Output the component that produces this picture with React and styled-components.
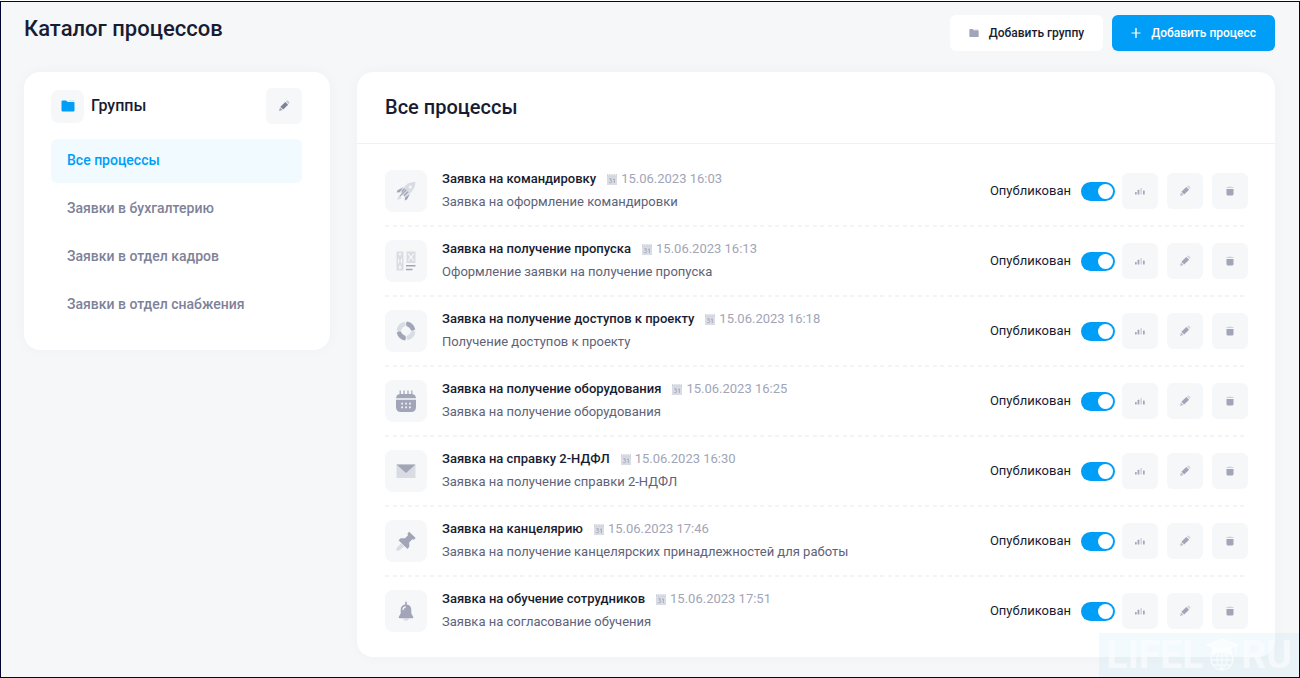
import React, { useState } from "react";
import styled, { createGlobalStyle } from "styled-components";

const GlobalStyle = createGlobalStyle`
  *, *::before, *::after { box-sizing: border-box; }
  body {
    margin: 0;
    background: #fff;
    color: #181c32;
    font-family: Roboto, "Liberation Sans", sans-serif;
    font-size: 13px;
  }
  button { font-family: inherit; cursor: pointer; }
`;

const Frame = styled.div`
  position: relative;
  margin-top: 1px;
  min-height: calc(100vh - 1px);
  padding: 13px 24px 19px 23px;
  border: 1px solid #050533;
  background: #f5f7f9;
  overflow: hidden;
`;

const Header = styled.header`
  display: flex;
  align-items: flex-start;
  justify-content: space-between;
  margin-bottom: 21px;
`;

const PageTitle = styled.h1`
  margin: 0;
  font-size: 22px;
  line-height: 28px;
  font-weight: 500;
`;

const HeaderActions = styled.div`
  display: flex;
  gap: 9px;
`;

const HeaderButton = styled.button`
  display: flex;
  align-items: center;
  gap: 10px;
  height: 36px;
  padding: 0 19px;
  border: 0;
  border-radius: 6px;
  background: ${(p) => (p.$primary ? "#009ef7" : "#fff")};
  color: ${(p) => (p.$primary ? "#fff" : "#181c32")};
  font-size: 12px;
  line-height: 16px;
  font-weight: 500;
`;

const Layout = styled.div`
  display: grid;
  grid-template-columns: minmax(240px, 1fr) minmax(0, 3fr);
  align-items: start;
  gap: 27px;
`;

const Card = styled.section`
  border-radius: 16px;
  background: #fff;
  box-shadow: 0 0 14px rgba(56, 71, 109, 0.03);
`;

const GroupsCard = styled(Card)`
  padding: 16px 28px 23px 27px;
`;

const GroupsHead = styled.div`
  display: flex;
  align-items: center;
  gap: 7px;
  margin-bottom: 15px;
`;

const GroupsTitle = styled.h2`
  flex: 1;
  margin: 0;
  font-size: 16px;
  line-height: 20px;
  font-weight: 500;
`;

const IconTile = styled.span`
  display: grid;
  place-items: center;
  flex: none;
  width: ${(p) => p.$size}px;
  height: ${(p) => p.$size}px;
  border-radius: 8px;
  background: #f5f7f9;
`;

const IconButton = styled.button`
  display: grid;
  place-items: center;
  width: 36px;
  height: 36px;
  padding: 0;
  border: 0;
  border-radius: 6px;
  background: #f5f7f9;
`;

const GroupNav = styled.nav`
  display: flex;
  flex-direction: column;
  gap: 4px;
`;

const GroupLink = styled.a`
  padding: 11px 16px 13px;
  border-radius: 6px;
  background: ${(p) => (p.$active ? "#f1faff" : "transparent")};
  color: ${(p) => (p.$active ? "#009ef7" : "#7e8299")};
  font-size: 14px;
  line-height: 20px;
  font-weight: 500;
  text-decoration: none;
`;

const ListHead = styled.div`
  padding: 22px 28px 23px;
  border-bottom: 1px solid #eff2f5;
`;

const ListTitle = styled.h2`
  margin: 0;
  font-size: 20px;
  line-height: 26px;
  font-weight: 500;
`;

const ProcessList = styled.ul`
  margin: 0;
  padding: 26px 27px 25px 28px;
  list-style: none;
`;

const ProcessRow = styled.li`
  display: flex;
  align-items: center;
  gap: 15px;
`;

const Divider = styled.li`
  height: 2px;
  margin: 13px 0;
  background: repeating-linear-gradient(
    90deg,
    #f3f4f7 0 4px,
    transparent 4px 8px,
    #f3f4f7 8px 12px,
    transparent 12px 15px
  );
`;

const RowText = styled.div`
  flex: 1;
  min-width: 0;
`;

const RowTop = styled.div`
  display: flex;
  align-items: center;
  gap: 11px;
`;

const RowTitle = styled.h3`
  margin: 0;
  font-size: 13px;
  line-height: 18px;
  font-weight: 500;
`;

const RowDate = styled.span`
  display: flex;
  align-items: center;
  gap: 4px;
  color: #a1a5b7;
  line-height: 18px;
`;

const RowNote = styled.p`
  margin: 5px 0 1px;
  color: #5e6278;
  line-height: 18px;
`;

const RowControls = styled.div`
  display: flex;
  align-items: center;
  gap: 7px;
`;

const SwitchLabel = styled.label`
  display: flex;
  align-items: center;
  gap: 10px;
  line-height: 20px;
`;

const Switch = styled.input`
  appearance: none;
  width: 34px;
  height: 19px;
  margin: 0;
  padding: 2px;
  border-radius: 10px;
  background: #d8dbe3;
  cursor: pointer;

  &::before {
    content: "";
    display: block;
    width: 15px;
    height: 15px;
    border-radius: 50%;
    background: #fff;
  }
  &:checked { background: #009ef7; }
  &:checked::before { margin-left: auto; }
`;

const RowButtons = styled.div`
  display: flex;
  gap: 9px;
`;

const Watermark = styled.div`
  position: absolute;
  right: 0;
  bottom: 0;
  display: flex;
  align-items: center;
  gap: 3px;
  height: 44px;
  padding: 0 7px;
  background: rgba(140, 205, 235, 0.11);
  color: rgba(255, 255, 255, 0.6);
  font-size: 39px;
  line-height: 44px;
  font-weight: 700;
  pointer-events: none;
`;

const dark = "#a1a5b7";
const light = "#dadce4";

const FolderIcon = ({ size, color }) => (
  <svg width={size} height={size} viewBox="0 0 14 14" aria-hidden="true">
    <path d="M0.5 2.5q0-1 1-1h3.4q.5 0 .8.4l1 1.1h5.800q1 0 1 1v7.500q0 1-1 1h-11q-1 0-1-1z" fill={color} />
    <path d="M7.500 1.500h5q1 0 1 1.200l-.7-.4H8z" fill={color} opacity=".3" />
  </svg>
);

const PlusIcon = () => (
  <svg width="10" height="10" viewBox="0 0 10 10" aria-hidden="true">
    <path d="M5 .5v9" stroke="#fff" strokeWidth="1.400" strokeLinecap="round" />
    <path d="M1 5h8" stroke="#fff" strokeWidth="1.400" strokeLinecap="round" opacity=".65" />
  </svg>
);

const PencilIcon = ({ color = dark }) => (
  <svg width="12" height="12" viewBox="0 0 12 12" aria-hidden="true">
    <path d="M7.300 1.900 10.100 4.700 5.200 9.600 2.400 6.800z" fill={color} />
    <path d="M8 1.400 8.800.8q.7-.5 1.300 0l1.100 1.100q.5.7 0 1.400l-.8.8z" fill={color} opacity=".4" />
    <path d="M2 7.500 4.500 10 1 11z" fill={color} opacity=".7" />
  </svg>
);

const ChartIcon = () => (
  <svg width="10" height="8" viewBox="0 0 10 8" aria-hidden="true">
    <rect x="0" y="5" width="1.700" height="2.500" rx=".5" fill={dark} />
    <rect x="2.600" y="2.800" width="1.700" height="4.700" rx=".5" fill={dark} />
    <rect x="5.300" y="1" width="1.700" height="6.500" rx=".5" fill={dark} opacity=".4" />
    <rect x="8" y="3.500" width="1.700" height="4" rx=".5" fill={dark} />
  </svg>
);

const TrashIcon = () => (
  <svg width="8" height="10" viewBox="0 0 8 10" aria-hidden="true">
    <path d="M.5 2.900h7v5.100q0 1.500-1.500 1.500H2Q.5 9.500.5 8z" fill={dark} />
    <path d="M.5 1h2L3 .5h2l.5.500h2v.9H.5z" fill={dark} opacity=".45" />
  </svg>
);

const DateIcon = () => (
  <svg width="10" height="11" viewBox="0 0 10 11" aria-hidden="true">
    <path d="M0 1.500h10V11H0z" fill={light} />
    <path d="M.8 0v2.500M2.900 0v2.500M5 0v2.500M7.100 0v2.500M9.200 0v2.500" stroke="#bfc2cf" strokeWidth=".9" />
    <path d="M2.300 4.800h2.200L3.400 6.300q1.300 0 1.300 1.200T3.200 8.800q-.8 0-1.100-.6M6 5.700 7.300 4.800V9" fill="none" stroke={dark} strokeWidth=".9" />
  </svg>
);

const RocketIcon = () => (
  <>
    <path d="M19.500.7Q12 .8 7.600 6.500L4.300 11.500 8.700 15.900 13.700 12.500Q19.400 8 19.500.7z" fill={light} />
    <path d="M7.200 6.300 1.500 9.200.6 11.500l3.200-.3z" fill={dark} />
    <path d="M13.900 13 11 18.600l-2.300.9.300-3.200z" fill={dark} />
    <path d="M10.200 8.700 3.500 15.600M12 10.700 8 14.800M8.500 7.700 5.800 10.500" stroke={dark} strokeWidth="1.300" />
    <path d="M2.900 14.200 5.900 17.200 1.100 19z" fill={light} />
    <circle cx="14.300" cy="6" r="1.600" fill="#f5f7f9" />
  </>
);

const PassIcon = () => (
  <>
    <path d="M.5.5h7v19h-7z" fill={light} />
    <path d="M10.500.5h9v11.500h-9z" fill={light} />
    <path d="M2.200 2.200 4 5.200l1.800-3zM2.200 17.500 4 13.500l1.800 4zM2 6.500v7L3.500 10zM6 6.500v7L4.500 10z" fill="#f5f7f9" />
    <path d="M12 2.500 18 10M18 2.500 12 10" stroke="#f5f7f9" strokeWidth="1.200" />
    <circle cx="15" cy="6.200" r="1.300" fill="#f5f7f9" />
    <path d="M10 14.700h9.500M10 18.500h6.500" stroke={dark} strokeWidth="1.600" />
  </>
);

const LifebuoyIcon = () => (
  <>
    <path d="M10.800.6Q17.500 1.500 19.300 8.300q-1.700 1.800-4.100 1.200Q14 6 10.500 4.900 9.300 2.300 10.800.6z" fill={dark} />
    <path d="M19.400 10.800Q18.500 17.500 11.700 19.300q-1.800-1.700-1.200-4.100Q14 14 15.100 10.500q2.600-1.200 4.300.3z" fill={light} />
    <path d="M9.200 19.400Q2.500 18.500.7 11.700q1.700-1.800 4.100-1.200Q6 14 9.500 15.100q1.200 2.600-.3 4.300z" fill={dark} />
    <path d="M.6 9.200Q1.500 2.500 8.300.7q1.800 1.700 1.200 4.100Q6 6 4.900 9.500 2.300 10.700.6 9.200z" fill={light} />
  </>
);

const CalendarIcon = () => (
  <>
    <path d="M4.200 -.5v4M8 -.5v4M12 -.5v4M15.800 -.5v4" stroke={dark} strokeWidth="1.200" />
    <path d="M0 7.200Q.5 3 4.500 3h11Q19.500 3 20 7.200z" fill={dark} />
    <path d="M0 8.700h20v7.300q0 5-5 5H5q-5 0-5-5z" fill={dark} />
    <path d="M5.300 12.600h1.700M9.200 12.600h1.700M13.100 12.600h1.700M5.300 16.300h1.700M9.200 16.300h1.700M13.100 16.300h1.700" stroke="#f5f7f9" strokeWidth="1.700" />
  </>
);

const MailIcon = () => (
  <>
    <path d="M.5 3.500h19V17H.5z" fill={light} />
    <path d="M.5 3.500h19L10 12z" fill={dark} />
  </>
);

const PinIcon = () => (
  <>
    <path d="M11.500 2.500 13.200.8 19.600 7 18 8.800 16.300 8.300 13.200 11.600 13.300 15.800 11.500 18 2.500 9.300 4.800 7.200 9 7.300 12 4.200z" fill={dark} />
    <path d="M5.200 12.300 8.200 15.200 3.200 19.500.3 19.700.5 17z" fill={light} />
  </>
);

const BellIcon = () => (
  <>
    <path d="M7 17.500h6q-.5 2.300-3 2.300t-3-2.300z" fill={light} />
    <path d="M9.200 1.500q0-.9.800-.9t.8.900v2q4.500.7 4.500 5.200v3.800l1.900 3.300q.5 1.500-1 1.500H3.800q-1.500 0-1-1.500l1.900-3.300V8.700q0-4.500 4.500-5.200z" fill={dark} />
    <path d="M7 8.500q.2-2 2.200-2.500" stroke="#f5f7f9" strokeWidth="1.300" fill="none" strokeLinecap="round" />
  </>
);

const groups = [
  "Все процессы",
  "Заявки в бухгалтерию",
  "Заявки в отдел кадров",
  "Заявки в отдел снабжения",
];

const processes = [
  { title: "Заявка на командировку", date: "15.06.2023 16:03", note: "Заявка на оформление командировки", Icon: RocketIcon },
  { title: "Заявка на получение пропуска", date: "15.06.2023 16:13", note: "Оформление заявки на получение пропуска", Icon: PassIcon },
  { title: "Заявка на получение доступов к проекту", date: "15.06.2023 16:18", note: "Получение доступов к проекту", Icon: LifebuoyIcon },
  { title: "Заявка на получение оборудования", date: "15.06.2023 16:25", note: "Заявка на получение оборудования", Icon: CalendarIcon },
  { title: "Заявка на справку 2-НДФЛ", date: "15.06.2023 16:30", note: "Заявка на получение справки 2-НДФЛ", Icon: MailIcon },
  { title: "Заявка на канцелярию", date: "15.06.2023 17:46", note: "Заявка на получение канцелярских принадлежностей для работы", Icon: PinIcon },
  { title: "Заявка на обучение сотрудников", date: "15.06.2023 17:51", note: "Заявка на согласование обучения", Icon: BellIcon },
];

function Process({ title, date, note, Icon }) {
  const [published, setPublished] = useState(true);
  return (
    <ProcessRow>
      <IconTile $size={42}>
        <svg width="20" height="20" viewBox="0 0 20 20" overflow="visible" aria-hidden="true"><Icon /></svg>
      </IconTile>
      <RowText>
        <RowTop>
          <RowTitle>{title}</RowTitle>
          <RowDate><DateIcon />{date}</RowDate>
        </RowTop>
        <RowNote>{note}</RowNote>
      </RowText>
      <RowControls>
        <SwitchLabel>
          Опубликован
          <Switch type="checkbox" checked={published} onChange={(e) => setPublished(e.target.checked)} />
        </SwitchLabel>
        <RowButtons>
          <IconButton type="button" aria-label="Статистика"><ChartIcon /></IconButton>
          <IconButton type="button" aria-label="Изменить"><PencilIcon /></IconButton>
          <IconButton type="button" aria-label="Удалить"><TrashIcon /></IconButton>
        </RowButtons>
      </RowControls>
    </ProcessRow>
  );
}

export default function App() {
  return (
    <>
      <GlobalStyle />
      <Frame>
        <Header>
          <PageTitle>Каталог процессов</PageTitle>
          <HeaderActions>
            <HeaderButton type="button"><FolderIcon size={10} color={dark} />Добавить группу</HeaderButton>
            <HeaderButton type="button" $primary><PlusIcon />Добавить процесс</HeaderButton>
          </HeaderActions>
        </Header>
        <Layout>
          <GroupsCard>
            <GroupsHead>
              <IconTile $size={33}><FolderIcon size={14} color="#009ef7" /></IconTile>
              <GroupsTitle>Группы</GroupsTitle>
              <IconButton type="button" aria-label="Изменить группы"><PencilIcon color="#7e8299" /></IconButton>
            </GroupsHead>
            <GroupNav>
              {groups.map((name, i) => (
                <GroupLink key={name} href="#" $active={i === 0}>{name}</GroupLink>
              ))}
            </GroupNav>
          </GroupsCard>
          <Card>
            <ListHead><ListTitle>Все процессы</ListTitle></ListHead>
            <ProcessList>
              {processes.map((p, i) => (
                <React.Fragment key={p.title}>
                  {i > 0 && <Divider role="presentation" />}
                  <Process {...p} />
                </React.Fragment>
              ))}
            </ProcessList>
          </Card>
        </Layout>
        <Watermark>
          <span>LIFEL</span>
          <svg width="32" height="34" viewBox="0 0 32 34" fill="none" stroke="currentColor" strokeWidth="1.500" aria-hidden="true">
            <path d="M16 1 31 7 16 13 1 7z" fill="currentColor" />
            <path d="M7 10v6q9-5 18 0v-6l-9 4zM30 7v10" fill="currentColor" />
            <circle cx="16" cy="21" r="11" />
            <path d="M16 14v18M5 22h22M16 12q-10 9 0 20M16 12q10 9 0 20M7 27h18" />
          </svg>
          <span>RU</span>
        </Watermark>
      </Frame>
    </>
  );
}
